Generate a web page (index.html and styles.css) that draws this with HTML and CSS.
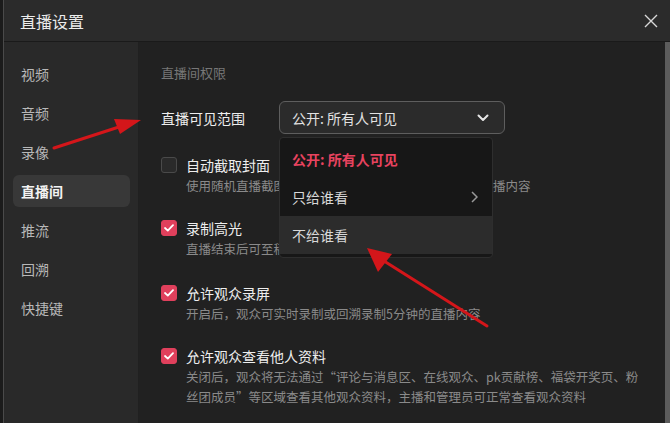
FILE: index.html
```html
<!DOCTYPE html>
<html lang="zh-CN">
<head>
    <meta charset="UTF-8">
    <title>直播设置</title>
    <link rel="stylesheet" href="styles.css">
</head>
<body>
    <div class="window">
        <div class="titlebar">
            <div class="title">直播设置</div>
            <div class="close">
                <svg width="14" height="14" viewBox="0 0 14 14"><path d="M1 1L13 13M13 1L1 13" stroke="#d8d8d8" stroke-width="1.4" fill="none"/></svg>
            </div>
        </div>
        <div class="body">
            <div class="sidebar">
                <div class="nav-item">视频</div>
                <div class="nav-item">音频</div>
                <div class="nav-item">录像</div>
                <div class="nav-item active">直播间</div>
                <div class="nav-item">推流</div>
                <div class="nav-item">回溯</div>
                <div class="nav-item">快捷键</div>
            </div>
            <div class="main">
                <div class="section-title">直播间权限</div>
                <div class="field-row">
                    <div class="field-label">直播可见范围</div>
                    <div class="select-wrap">
                        <div class="select">
                            <span>公开: 所有人可见</span>
                            <svg width="12" height="8" viewBox="0 0 12 8"><path d="M1.5 1.5L6 6L10.5 1.5" stroke="#e6e6e6" stroke-width="2" fill="none" stroke-linecap="round" stroke-linejoin="round"/></svg>
                        </div>
                        <div class="dropdown">
                            <div class="option selected">公开: 所有人可见</div>
                            <div class="option">
                                <span>只给谁看</span>
                                <svg width="7" height="12" viewBox="0 0 7 12"><path d="M1 1L6 6L1 11" stroke="#999" stroke-width="1.5" fill="none"/></svg>
                            </div>
                            <div class="option hover">不给谁看</div>
                        </div>
                    </div>
                </div>

                <div class="check-item">
                    <div class="check-row">
                        <span class="box"></span>
                        <span class="check-label">自动截取封面</span>
                    </div>
                    <div class="check-desc">使用随机直播截图作为封面，开播后每5分钟自动截取直播内容</div>
                </div>
                <div class="check-item">
                    <div class="check-row">
                        <span class="box checked"><svg width="10" height="8" viewBox="0 0 10 8"><path d="M1 4L3.8 6.6L9 1.2" stroke="#fff" stroke-width="1.8" fill="none" stroke-linecap="round" stroke-linejoin="round"/></svg></span>
                        <span class="check-label">录制高光</span>
                    </div>
                    <div class="check-desc">直播结束后可至稿件管理查看自动录制的高光片段</div>
                </div>
                <div class="check-item">
                    <div class="check-row">
                        <span class="box checked"><svg width="10" height="8" viewBox="0 0 10 8"><path d="M1 4L3.8 6.6L9 1.2" stroke="#fff" stroke-width="1.8" fill="none" stroke-linecap="round" stroke-linejoin="round"/></svg></span>
                        <span class="check-label">允许观众录屏</span>
                    </div>
                    <div class="check-desc">开启后，观众可实时录制或回溯录制5分钟的直播内容</div>
                </div>
                <div class="check-item">
                    <div class="check-row">
                        <span class="box checked"><svg width="10" height="8" viewBox="0 0 10 8"><path d="M1 4L3.8 6.6L9 1.2" stroke="#fff" stroke-width="1.8" fill="none" stroke-linecap="round" stroke-linejoin="round"/></svg></span>
                        <span class="check-label">允许观众查看他人资料</span>
                    </div>
                    <div class="check-desc">关闭后，观众将无法通过“评论与消息区、在线观众、pk贡献榜、福袋开奖页、粉丝团成员”等区域查看其他观众资料，主播和管理员可正常查看观众资料</div>
                </div>
            </div>
            <div class="scrollbar"></div>
        </div>

        <svg class="annotations" width="670" height="423" viewBox="0 0 670 423">
            <line x1="54" y1="148" x2="122" y2="126" stroke="#d4161a" stroke-width="3" stroke-linecap="round"/>
            <polygon points="141,120 114,119 120,134" fill="#d4161a"/>
            <line x1="487" y1="326" x2="384" y2="261" stroke="#d4161a" stroke-width="3" stroke-linecap="round"/>
            <polygon points="367,248 378,272 392,254" fill="#d4161a"/>
        </svg>
    </div>
</body>
</html>
```

FILE: styles.css
```css
body {
    margin: 0;
    width: 670px;
    height: 423px;
    background-color: #1b1b1b;
    font-family: "Noto Sans CJK SC", "Noto Sans", sans-serif;
    overflow: hidden;
}

.window {
    position: relative;
    margin-left: 3px;
    height: 423px;
    border-left: 1px solid #4a4a4a;
    display: flex;
    flex-direction: column;
}

.titlebar {
    height: 41px;
    flex-shrink: 0;
    display: flex;
    align-items: center;
    justify-content: space-between;
    background-color: #2b2b2b;
    border-bottom: 1px solid #1a1a1a;
    padding: 0 12px 0 16px;
}

.title {
    font-size: 16px;
    color: #ececec;
}

.close {
    display: flex;
    align-items: center;
    padding-top: 1px;
}

.body {
    flex: 1;
    display: flex;
}

.sidebar {
    width: 117px;
    padding: 16px 8px 0 9px;
    background-color: #292929;
    display: flex;
    flex-direction: column;
    gap: 7px;
    border-right: 1px solid #202020;
}

.nav-item {
    height: 32px;
    line-height: 32px;
    padding-left: 8px;
    font-size: 14px;
    color: #b8b8b8;
    border-radius: 6px;
}

.nav-item.active {
    background-color: #383838;
    color: #f2f2f2;
    font-weight: bold;
}

.main {
    flex: 1;
    background-color: #212121;
    padding: 22px 0 0 22px;
}

.section-title {
    font-size: 13px;
    color: #777;
    line-height: 18px;
}

.field-row {
    display: flex;
    align-items: center;
    margin-top: 19px;
}

.field-label {
    width: 118px;
    font-size: 14px;
    color: #eee;
}

.select-wrap {
    position: relative;
}

.select {
    width: 200px;
    height: 31px;
    box-sizing: content-box;
    padding: 0 12px;
    border: 1px solid #5e5e5e;
    border-radius: 6px;
    background-color: #2b2b2b;
    display: flex;
    align-items: center;
    justify-content: space-between;
    font-size: 14px;
    color: #e2e2e2;
}

.select svg {
    margin-right: 3px;
}

.dropdown {
    position: absolute;
    top: 36px;
    left: 0;
    width: 212px;
    padding: 2px 0 3px;
    background-color: #171717;
    border: 1px solid #2e2e2e;
    border-radius: 4px;
    z-index: 2;
}

.option {
    height: 38px;
    padding: 0 14px 0 12px;
    display: flex;
    align-items: center;
    justify-content: space-between;
    font-size: 14px;
    color: #d8d8d8;
}

.option.selected {
    color: #e8435f;
    font-weight: bold;
}

.option.hover {
    background-color: #2c2c2c;
}

.check-item {
    margin-bottom: 21px;
}

.field-row + .check-item {
    margin-top: 20px;
}

.check-item:nth-child(4) {
    margin-bottom: 23px;
}

.check-row {
    display: flex;
    align-items: center;
    height: 22px;
}

.box {
    width: 14px;
    height: 14px;
    border: 1px solid #4a4a4a;
    background-color: #2a2a2a;
    border-radius: 3px;
    margin-right: 9px;
    display: flex;
    align-items: center;
    justify-content: center;
}

.box.checked {
    background-color: #e0405c;
    border-color: #e0405c;
}

.check-label {
    font-size: 14px;
    color: #eee;
}

.check-desc {
    padding-left: 25px;
    padding-right: 22px;
    font-size: 12.5px;
    line-height: 20px;
    color: #8a8a8a;
}

.scrollbar {
    width: 5px;
    background-color: #5c5c5c;
}

.annotations {
    position: absolute;
    top: 0;
    left: -4px;
    z-index: 5;
    pointer-events: none;
}
```
